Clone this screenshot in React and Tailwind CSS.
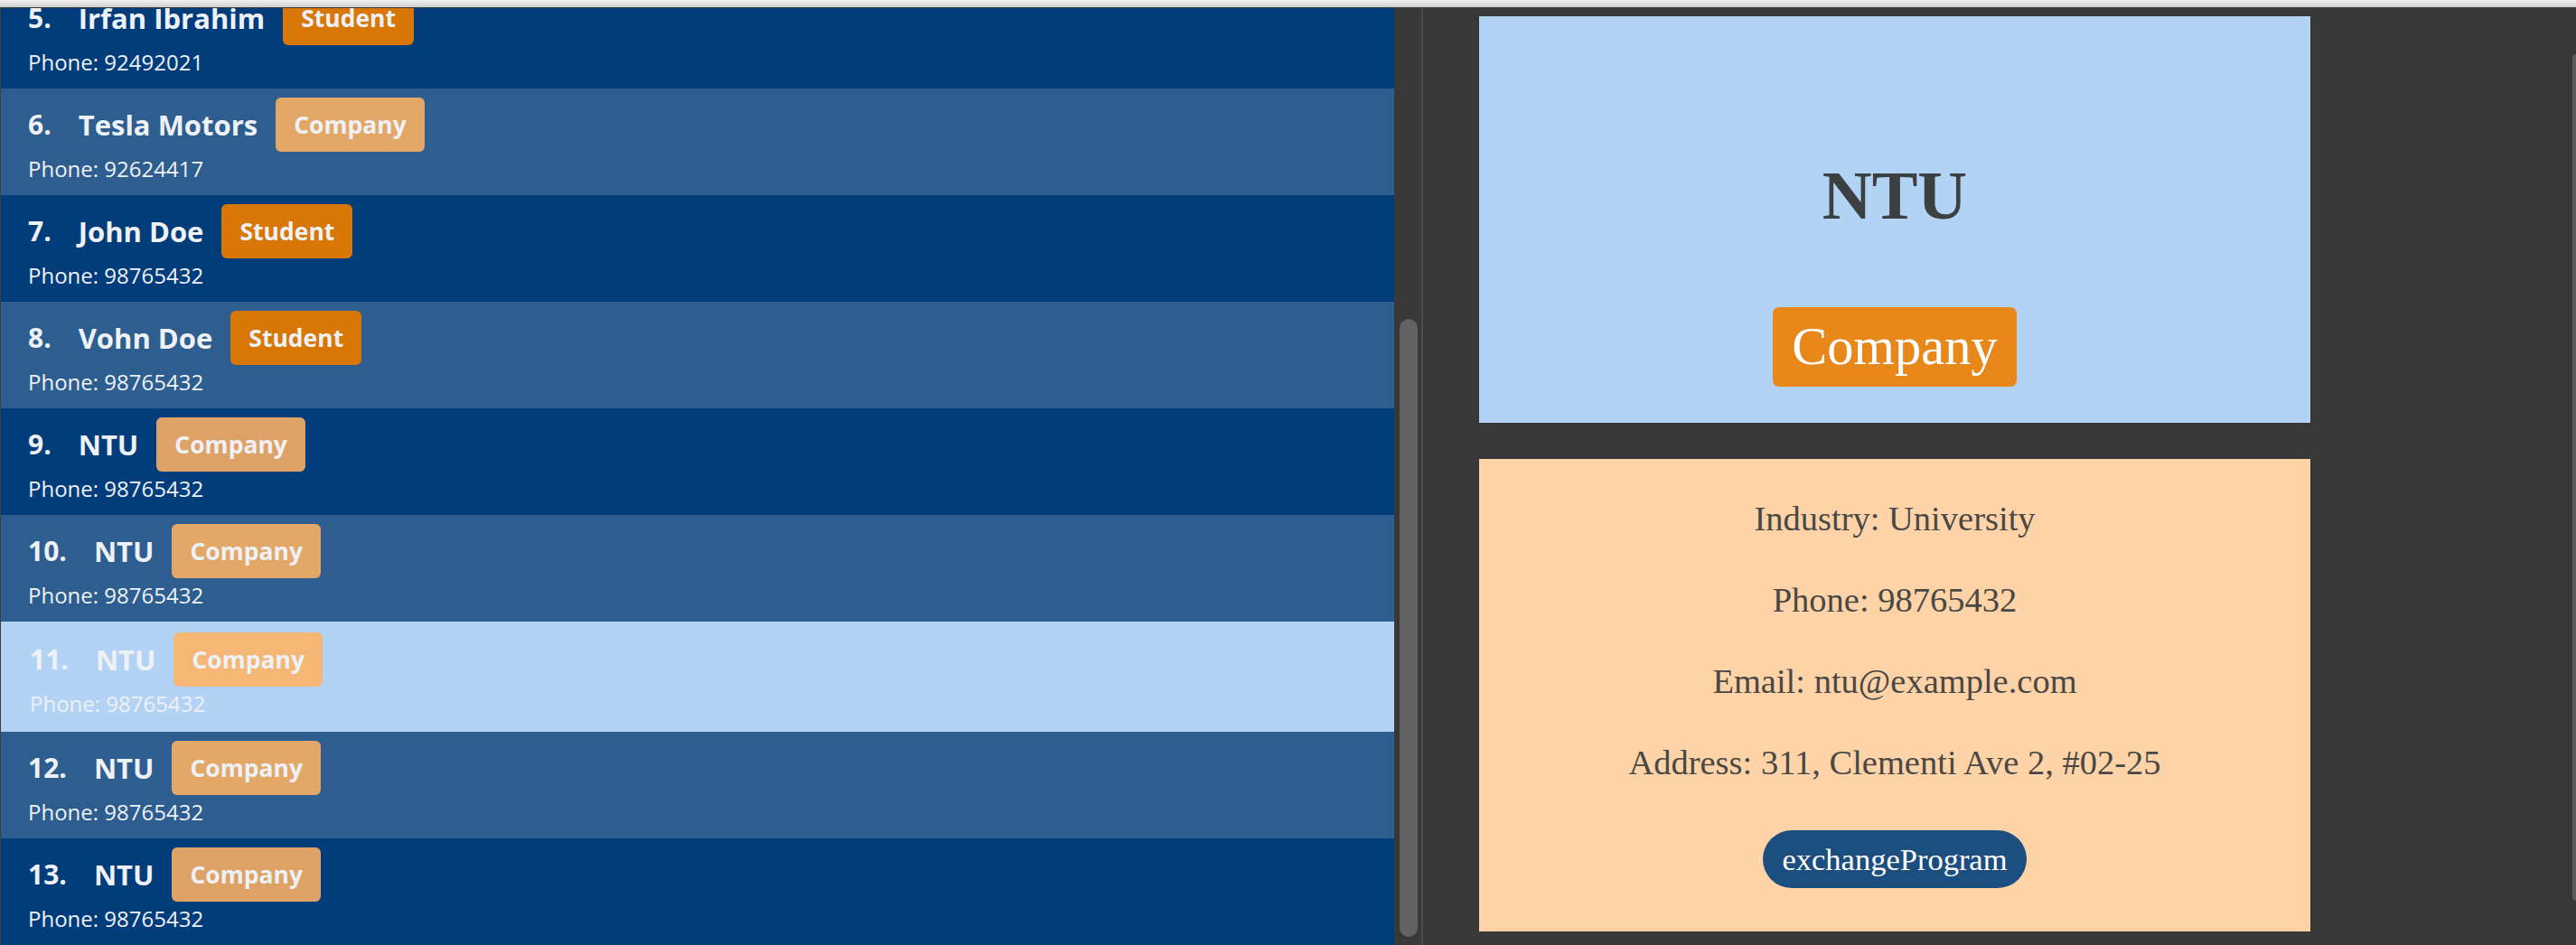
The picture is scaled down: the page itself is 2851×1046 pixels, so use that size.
import React from 'react';

const people = [
  { id: 5, name: 'Irfan Ibrahim', tag: 'Student', phone: '92492021' },
  { id: 6, name: 'Tesla Motors', tag: 'Company', phone: '92624417' },
  { id: 7, name: 'John Doe', tag: 'Student', phone: '98765432' },
  { id: 8, name: 'Vohn Doe', tag: 'Student', phone: '98765432' },
  { id: 9, name: 'NTU', tag: 'Company', phone: '98765432' },
  { id: 10, name: 'NTU', tag: 'Company', phone: '98765432' },
  { id: 11, name: 'NTU', tag: 'Company', phone: '98765432' },
  { id: 12, name: 'NTU', tag: 'Company', phone: '98765432' },
  { id: 13, name: 'NTU', tag: 'Company', phone: '98765432' },
];

const SELECTED = 11;

function Tag({ label }) {
  // student tags are solid, company tags let the row colour through a little
  const color = label === 'Student' ? 'bg-[#d97706]' : 'bg-[#ffb263]/[0.87]';
  return (
    <span className={`${color} ml-[20px] h-[60px] px-[20px] flex items-center rounded-[6px] text-[26.5px] leading-[26px] font-bold`}>
      {label}
    </span>
  );
}

function PersonCard({ person }) {
  let rowClass = 'bg-[#2d5e8f] h-[118px] pt-[10px] pl-[30px]';
  if (person.id === SELECTED) {
    rowClass = 'bg-[#b3d3f5] h-[122px] pt-[12px] pl-[32px]';
  } else if (person.id % 2 === 1) {
    rowClass = 'bg-[#013c7b] h-[118px] pt-[10px] pl-[30px]';
  }

  return (
    <div className={`${rowClass} text-[#eef1f6]`}>
      <div className="h-[60px] flex items-center">
        <span className="text-[30px] leading-[30px] font-bold">{person.id}.</span>
        <span className="ml-[30px] text-[31px] leading-[30px] font-bold">{person.name}</span>
        <Tag label={person.tag} />
      </div>
      <p className="mt-[5px] text-[24px] leading-[28px]">Phone: {person.phone}</p>
    </div>
  );
}

export default function App() {
  return (
    <div className="h-screen w-full overflow-hidden flex flex-col bg-[#383838] font-['Open_Sans',sans-serif]">
      <div className="h-[8px] shrink-0 bg-gradient-to-b from-[#f2f2f2] to-[#cfcfcf]" />

      <div className="flex-1 flex min-h-0">
        {/* person list */}
        <div className="w-[1573px] shrink-0 flex border-l border-[#3f3f3f] pt-px">
          <div className="w-[1542px] h-full overflow-hidden bg-[#013c7b]">
            <div className="-mt-[29px]">
              {people.map((p) => (
                <PersonCard key={p.id} person={p} />
              ))}
            </div>
          </div>
          <div className="w-[30px] pl-[6px] pt-[344px]">
            <div className="w-[20px] h-[684px] rounded-[10px] bg-[#626262]" />
          </div>
        </div>

        <div className="w-[2px] shrink-0 bg-[#4b4b4b]" />

        {/* detail panel */}
        <div className="flex-1 flex font-['Liberation_Serif',serif]">
          <div className="flex-1 pl-[62px] pt-[10px]">
            <div className="w-[920px] h-[450px] bg-[#b3d3f5] flex flex-col items-center pt-[160px]">
              <h1 className="text-[76px] leading-[76px] font-bold text-[#3d4043]">NTU</h1>
              <span className="mt-[86px] h-[88px] px-[21px] flex items-center rounded-[7px] bg-[#e8871a] text-white text-[58.5px] leading-[58px]">
                Company
              </span>
            </div>

            <div className="mt-[40px] w-[920px] h-[523px] bg-[#fed3a7] flex flex-col items-center pt-[47px] text-[38.5px] leading-[38px] text-[#4a4845]">
              <p>Industry: University</p>
              <p className="mt-[52px]">Phone: 98765432</p>
              <p className="mt-[52px]">Email: ntu@example.com</p>
              <p className="mt-[52px]">Address: 311, Clementi Ave 2, #02-25</p>
              <span className="mt-[56px] h-[64px] px-[21px] flex items-center rounded-full bg-[#1c4e80] text-white text-[34.5px] leading-[34px]">
                exchangeProgram
              </span>
            </div>
          </div>
          <div className="w-[4px] shrink-0 pt-[52px]">
            <div className="h-[937px] rounded-l-[4px] bg-[#5c5c5c]" />
          </div>
        </div>
      </div>
    </div>
  );
}
